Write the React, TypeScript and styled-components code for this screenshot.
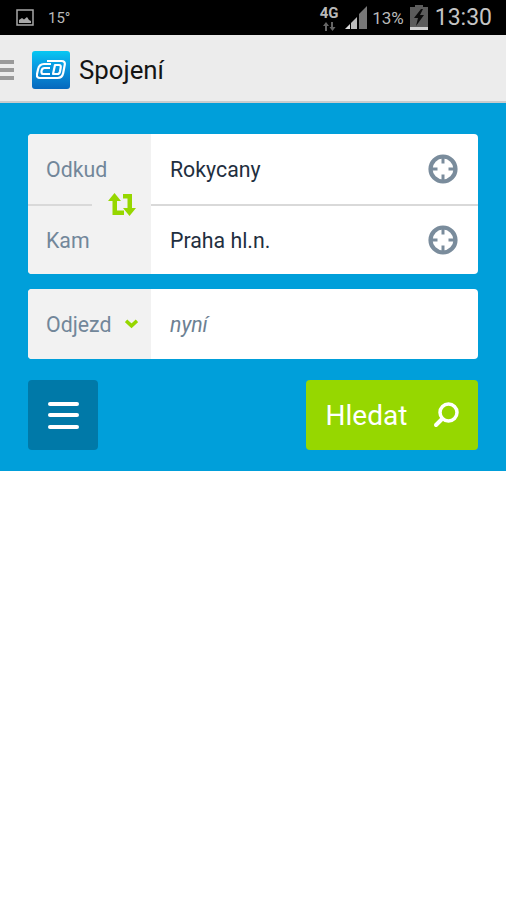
import React from "react";
import styled, { createGlobalStyle } from "styled-components";

const Global = createGlobalStyle`
  html, body { margin: 0; padding: 0; background: #fff; }
  body { font-family: Roboto, "Liberation Sans", sans-serif; }
  * { box-sizing: border-box; }
`;
const Page = styled.div`width: 506px; height: 900px; overflow: hidden; background: #fff;`;
const StatusBar = styled.div`
  height: 35px; background: #000; color: #b9b9b9; display: flex; align-items: center; padding: 0 14px 0 16px;
`;
const Temp = styled.span`font-size: 15px; margin-left: 14px; flex: 1;`;
const Network = styled.span`
  display: flex; flex-direction: column; align-items: center; width: 20px; margin-right: 6px;
  font-size: 15px; font-weight: 700; line-height: 14px; gap: 2px; margin-top: 1px;
`;
const Pct = styled.span`font-size: 17px; margin: 0 6px 0 5px;`;
const Clock = styled.span`font-size: 23px; margin-left: 7px; color: #c4c4c4;`;
const AppBar = styled.header`
  height: 68px; background: #ececec; border-bottom: 2px solid #c9cccd; display: flex; align-items: center;
  padding-top: 3px;
`;
const Drawer = styled.div`
  width: 14px; height: 20px; display: flex; flex-direction: column; justify-content: space-between; margin-right: 18px;
`;
const DrawerBar = styled.i`display: block; height: 4px; background: #9a9a9a;`;
const Logo = styled.div`
  width: 38px; height: 38px; border-radius: 3px; background: linear-gradient(180deg, #06c8f2 0%, #0a9fe4 35%, #0668bd 100%);
  display: flex; align-items: center; justify-content: center; margin-right: 9px;
`;
const Title = styled.h1`margin: 0; font-size: 25.800px; font-weight: 400; color: #141414;`;
const Blue = styled.main`
  height: 368px; background: #009fda; padding: 31px 28px 0; display: flex; flex-direction: column;
`;
const Card = styled.div`
  position: relative; background: #fff; border-radius: 4px; overflow: hidden; width: 450px; margin-bottom: 15px;
`;
const Row = styled.div<{ $divided?: boolean }>`
  display: flex; height: 70px; border-top: ${p => (p.$divided ? "2px solid #d9d9d9" : "0")};
`;
const Label = styled.div`
  width: 123px; background: #f2f2f2; color: #72879a; font-size: 21.300px; padding-left: 18px;
  display: flex; align-items: center; gap: 14px;
`;
const Value = styled.div<{ $muted?: boolean }>`
  flex: 1; display: flex; align-items: center; justify-content: space-between; padding: 0 20px 0 19px;
  font-size: 21.300px; color: ${p => (p.$muted ? "#6d8193" : "#1f2f40")}; font-style: ${p => (p.$muted ? "italic" : "normal")};
`;
const Swap = styled.div`
  position: absolute; left: 64px; top: 55px; width: 59px; height: 30px; background: #f2f2f2;
  display: flex; align-items: center; justify-content: center;
`;
const Actions = styled.div`display: flex; justify-content: space-between; margin-top: 6px;`;
const MenuButton = styled.button`
  width: 70px; height: 70px; border: 0; border-radius: 4px; background: #0079a8; padding: 0;
  display: flex; flex-direction: column; align-items: center; justify-content: center; gap: 7.500px;
`;
const MenuBar = styled.i`display: block; width: 31px; height: 4px; border-radius: 2px; background: #fff;`;
const SearchButton = styled.button`
  width: 172.500px; height: 70px; border: 0; border-radius: 4px; background: #96d700; color: #fff;
  font-family: inherit; font-size: 28px; display: flex; align-items: center; justify-content: space-between;
  padding: 0 19px 0 20px;
`;

const Target = () => (
  <svg width="30" height="30" viewBox="0 0 30 30" fill="none" stroke="#7a8c9c">
    <circle cx="15" cy="15" r="12.500" strokeWidth="4.200" />
    <path d="M15 3v6.500M15 20.500v6.500M3 15h6.500M20.500 15h6.500" strokeWidth="3" />
  </svg>
);

export default function App() {
  return (
    <Page>
      <Global />
      <StatusBar>
        <svg width="18" height="17" viewBox="0 0 18 17" fill="none">
          <rect x="1" y="1" width="16" height="15" stroke="#a8a8a8" strokeWidth="1.500" />
          <path d="M3 14v-3l3-2 2 1.500 3-2.500 2 3 2 1v2z" fill="#a8a8a8" />
        </svg>
        <Temp>15°</Temp>
        <Network>
          4G
          <svg width="14" height="9" viewBox="0 0 14 9" fill="#666">
            <path d="M3 9V4H1l3-4 3 4H5v5zM9 0v5H7.500l3 4 3-4H11V0z" />
          </svg>
        </Network>
        <svg width="22" height="23" viewBox="0 0 22 23" fill="#777">
          <path d="M22 0v23H14V8z" />
          <path d="M0 23l5-5v5z" fill="#ddd" />
          <path d="M6 17l6-6v12H6z" fill="#bbb" />
        </svg>
        <Pct>13%</Pct>
        <svg width="18" height="25" viewBox="0 0 18 25">
          <path d="M5 0h8v2h5v23H0V2h5z" fill="#5c5c5c" />
          <rect y="22" width="18" height="3" fill="#d0d0d0" />
          <path d="M11 4L4 13h4l-2 8 8-11h-4l3-6z" fill="#0c0c0c" />
        </svg>
        <Clock>13:30</Clock>
      </StatusBar>
      <AppBar>
        <Drawer><DrawerBar /><DrawerBar /><DrawerBar /></Drawer>
        <Logo>
          <svg width="30" height="21" viewBox="0 0 30 21" fill="none" stroke="#fff" strokeWidth="2.200" strokeLinejoin="round">
            <path d="M11 2h14.500c2.500 0 3.800 1.500 3.200 4l-1.500 8c-.6 3-2.700 5-5.700 5H4c-2.500 0-3.500-1.500-3-4l1-4.500C2.700 7 5 5 8 5h7" />
            <path d="M14 9H8.500C7 9 6 10 5.600 11.500S5.500 15 7 15h7" />
            <path d="M17 15h4.500c1.400 0 2.200-1 2.500-2.500l.7-4C25 7 24.400 6 23 6h-4z" />
          </svg>
        </Logo>
        <Title>Spojení</Title>
      </AppBar>
      <Blue>
        <Card>
          <Row>
            <Label>Odkud</Label>
            <Value>Rokycany<Target /></Value>
          </Row>
          <Row $divided>
            <Label>Kam</Label>
            <Value>Praha hl.n.<Target /></Value>
          </Row>
          <Swap>
            <svg width="28" height="23" viewBox="0 0 28 23" fill="#96d700">
              <path d="M6.500 0L13 8H9v9.500h7V22H4.500V8H0z" />
              <path d="M21.500 23L28 15h-4V1h-9v4.500h4.500V15H15z" />
            </svg>
          </Swap>
        </Card>
        <Card>
          <Row>
            <Label>
              Odjezd
              <svg width="13" height="10" viewBox="0 0 13 10" fill="none" stroke="#96d700" strokeWidth="3.600">
                <path d="M1 1.800l5.500 5 5.500-5" />
              </svg>
            </Label>
            <Value $muted>nyní</Value>
          </Row>
        </Card>
        <Actions>
          <MenuButton aria-label="Menu"><MenuBar /><MenuBar /><MenuBar /></MenuButton>
          <SearchButton>
            Hledat
            <svg width="26" height="26" viewBox="0 0 26 26" fill="none" stroke="#fff" strokeLinecap="round">
              <circle cx="15.500" cy="10.500" r="8.500" strokeWidth="3.500" />
              <path d="M9 17l-6 6" strokeWidth="4" />
            </svg>
          </SearchButton>
        </Actions>
      </Blue>
    </Page>
  );
}
